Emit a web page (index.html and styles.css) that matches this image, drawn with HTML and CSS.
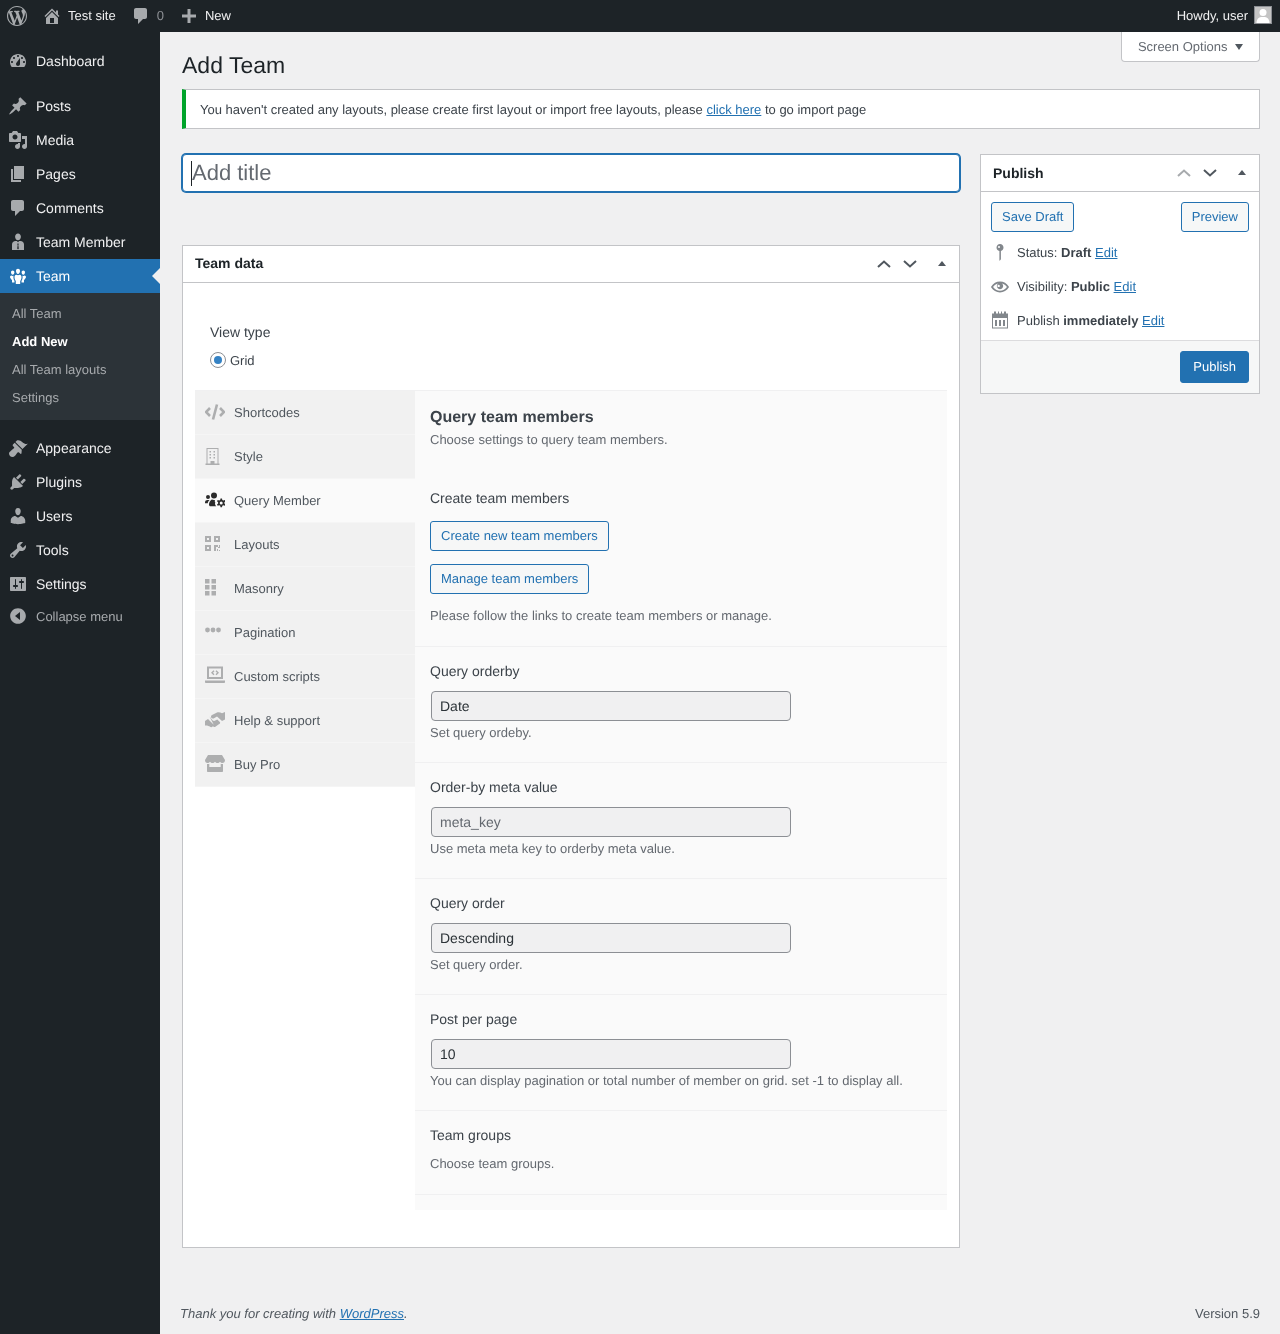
FILE: index.html
```html
<!DOCTYPE html>
<html lang="en">
<head>
  <meta charset="UTF-8">
  <meta name="viewport" content="width=device-width, initial-scale=1.0">
  <title>Add Team</title>
  <link rel="stylesheet" href="styles.css">
</head>
<body>
  <div class="adminbar">
    <div class="bar-left">
      <svg class="bar-logo" viewBox="0 0 20 20"><path fill-rule="evenodd" d="M10 0C4.480 0 0 4.490 0 10c0 5.520 4.480 10 10 10 5.510 0 10-4.480 10-10S15.510 0 10 0zM1.110 10c0-1.300.23-2.480.72-3.590L6.100 18.090C3.120 16.650 1.110 13.530 1.110 10zm9.020 1.460l2.580 6.980c-.86.29-1.760.45-2.710.45-.79 0-1.570-.11-2.290-.33zM17.840 5.750c.7 1.290 1.050 2.710 1.050 4.250 0 3.290-1.730 6.240-4.400 7.780.97-2.590 1.940-5.210 2.920-7.780.24-.64.74-1.870.43-4.250zM10 1.110c2.330 0 4.450.87 6.050 2.340-.68-.11-1.650.39-1.650 1.580 0 .74.45 1.360.9 2.100.35.61.55 1.360.55 2.460 0 1.490-1.400 5-1.400 5l-3.030-8.370c.54-.02.82-.17.82-.17.5-.05.44-1.250-.06-1.220 0 0-1.440.12-2.380.12-.87 0-2.330-.12-2.330-.12-.5-.03-.56 1.200-.06 1.220l.92.08 1.260 3.410-1.810 5.320L4.370 6.220c.55-.02 1.170-.08 1.170-.08.5-.06.44-1.130-.06-1.110 0 0-1.450.11-2.370.11-.18 0-.37 0-.58-.01C4.120 2.690 6.870 1.110 10 1.110z"/></svg>
      <span class="bar-item site-item">
        <svg class="bar-icon" viewBox="0 0 20 20"><path d="M16 8.500l1.530 1.530-1.060 1.060L10 4.620l-6.470 6.470-1.060-1.060L10 2.500l4 4v-2h2v4zm-6-2.460l6 5.990V18H4v-5.970zM12 17v-5H8v5h4z"/></svg>
        <span class="bar-text">Test site</span>
      </span>
      <span class="bar-item comment-item">
        <svg class="bar-icon" viewBox="0 0 20 20"><path d="M5 2h9c1.100 0 2 .9 2 2v7c0 1.100-.9 2-2 2h-2l-5 5v-5H5c-1.100 0-2-.9-2-2V4c0-1.100.9-2 2-2z"/></svg>
        <span class="bar-text count">0</span>
      </span>
      <span class="bar-item new-item">
        <svg class="bar-icon" viewBox="0 0 20 20"><path d="M8.500 3h3v5.500H17v3h-5.500V17h-3v-5.500H3v-3h5.500z"/></svg>
        <span class="bar-text">New</span>
      </span>
    </div>
    <div class="bar-right">
      <span class="bar-text">Howdy, user</span>
      <span class="avatar">
        <svg viewBox="0 0 16 16"><circle cx="8" cy="5.500" r="3.500"/><path d="M1.500 16c0-4 2.500-5.800 4.500-6h4c2 .2 4.500 2 4.500 6z"/></svg>
      </span>
    </div>
  </div>

  <div class="layout">
    <nav class="sidebar">
      <ul class="menu">
        <li class="menu-item">
          <svg class="menu-icon" viewBox="0 0 20 20"><path fill-rule="evenodd" d="M3.760 16h12.480c1.100-1.370 1.760-3.110 1.760-5 0-4.420-3.580-8-8-8s-8 3.580-8 8c0 1.890.66 3.630 1.760 5zM10 4c.55 0 1 .45 1 1s-.45 1-1 1-1-.45-1-1 .45-1 1-1zM6 6c.55 0 1 .45 1 1s-.45 1-1 1-1-.45-1-1 .45-1 1-1zm8 0c.55 0 1 .45 1 1s-.45 1-1 1-1-.45-1-1 .45-1 1-1zm-5.370 5.550L12 7v6c0 1.100-.9 2-2 2s-2-.9-2-2c0-.57.24-1.080.63-1.450zM4 10c.55 0 1 .45 1 1s-.45 1-1 1-1-.45-1-1 .45-1 1-1zm12 0c.55 0 1 .45 1 1s-.45 1-1 1-1-.45-1-1 .45-1 1-1z"/></svg>
          Dashboard
        </li>
        <li class="menu-sep"></li>
        <li class="menu-item">
          <svg class="menu-icon" viewBox="0 0 20 20"><path d="M10.440 3.020l1.820-1.820 6.360 6.350-1.830 1.820c-1.050-.68-2.480-.57-3.410.36l-.75.75c-.92.93-1.040 2.350-.35 3.410l-1.830 1.820-2.410-2.410-2.800 2.790c-.42.42-3.380 2.710-3.800 2.290s1.860-3.390 2.280-3.810l2.790-2.790L4.100 9.360l1.830-1.820c1.050.69 2.480.57 3.400-.36l.75-.75c.93-.92 1.050-2.350.36-3.410z"/></svg>
          Posts
        </li>
        <li class="menu-item">
          <svg class="menu-icon" viewBox="0 0 20 20"><path fill-rule="evenodd" d="M13 11V4c0-.55-.45-1-1-1h-1.670L9 1H5L3.670 3H2c-.55 0-1 .45-1 1v7c0 .55.45 1 1 1h10c.55 0 1-.45 1-1zM7 4.500c1.380 0 2.500 1.120 2.500 2.500S8.380 9.500 7 9.500 4.500 8.380 4.500 7 5.620 4.500 7 4.500zM14 6h5v10.500c0 1.380-1.120 2.500-2.500 2.500S14 17.880 14 16.500s1.120-2.500 2.500-2.500c.17 0 .34.020.5.050V9h-3V6zm-4 8.050V13h2v3.500c0 1.380-1.120 2.500-2.500 2.500S7 17.880 7 16.500 8.120 14 9.500 14c.17 0 .34.020.5.050z"/></svg>
          Media
        </li>
        <li class="menu-item">
          <svg class="menu-icon" viewBox="0 0 20 20"><path d="M6 15V2h10v13H6zm-1 1h8v2H3V5h2v11z"/></svg>
          Pages
        </li>
        <li class="menu-item">
          <svg class="menu-icon" viewBox="0 0 20 20"><path d="M5 2h9c1.100 0 2 .9 2 2v7c0 1.100-.9 2-2 2h-2l-5 5v-5H5c-1.100 0-2-.9-2-2V4c0-1.100.9-2 2-2z"/></svg>
          Comments
        </li>
        <li class="menu-item">
          <svg class="menu-icon" viewBox="0 0 20 20"><path fill-rule="evenodd" d="M10 1.500c1.700 0 2.900 1.400 2.900 3.200S11.700 8.200 10 8.200 7.100 6.500 7.100 4.700 8.300 1.500 10 1.500zM7.500 9h1.300L10 10.300 11.200 9h1.300c1.900 0 3.500 1.500 3.500 3.400V18H4v-5.600C4 10.500 5.600 9 7.500 9zm2.500 2.200L9.200 12l.5 1-.5 3.500.8 1 .8-1-.5-3.500.5-1z"/></svg>
          Team Member
        </li>
        <li class="menu-item is-current">
          <svg class="menu-icon" viewBox="0 0 20 20"><path d="M10 2.800c1.200 0 2 .9 2 2.200s-.8 2.900-2 2.900S8 6.300 8 5s.8-2.200 2-2.200zM4.700 4.500c1 0 1.700.7 1.700 1.800s-.7 2.500-1.700 2.500S3 7.400 3 6.300s.7-1.800 1.700-1.800zm10.600 0c1 0 1.700.7 1.700 1.800s-.7 2.500-1.700 2.500-1.700-1.400-1.700-2.500.7-1.800 1.700-1.800zM8.200 8.700L10 9.300l1.800-.6c1 .3 1.700 1.100 1.700 2.200 0 1.800-.6 3-1.300 4V18H7.800v-3.100c-.7-1-1.300-2.200-1.300-4 0-1.100.7-1.900 1.700-2.200zM3.300 9.600l1.400.4 1-.3c-.2.400-.3.800-.3 1.200 0 1.600.5 3 1.100 3.900v1.700H4V14c-.8-.7-2-2-2-3 0-.6.600-1.200 1.300-1.400zm13.400 0c.7.2 1.300.8 1.300 1.400 0 1-1.200 2.300-2 3v2.500h-2.500v-1.700c.6-.9 1.100-2.300 1.100-3.900 0-.4-.1-.8-.3-1.200l1 .3z"/></svg>
          Team
        </li>
        <li>
          <ul class="submenu">
            <li>All Team</li>
            <li class="is-active">Add New</li>
            <li>All Team layouts</li>
            <li>Settings</li>
          </ul>
        </li>
        <li class="menu-sep"></li>
        <li class="menu-item">
          <svg class="menu-icon" viewBox="0 0 20 20"><path d="M14.480 11.060L7.410 3.990l1.500-1.500c.5-.56 2.300-.47 3.510.32 1.210.8 1.430 1.280 2.910 2.100 1.180.64 2.450 1.260 4.450.85zm-.71.71L6.700 4.700 4.930 6.470c-.39.39-.39 1.020 0 1.410l1.060 1.060c.39.39.39 1.030 0 1.420-.6.6-1.430 1.110-2.210 1.690-.35.26-.7.53-1.010.84C1.430 13.730 1 14.620 1 15.500 1 17.430 2.570 19 4.500 19c.88 0 1.770-.43 2.570-1.230.31-.31.58-.66.84-1.010.58-.78 1.090-1.610 1.690-2.210.39-.39 1.030-.39 1.420 0l1.060 1.060c.39.39 1.020.39 1.410 0z"/></svg>
          Appearance
        </li>
        <li class="menu-item">
          <svg class="menu-icon" viewBox="0 0 20 20"><path d="M13.110 4.360L9.870 7.600 8 5.730l3.240-3.240c.35-.34 1.050-.2 1.560.32.52.51.66 1.210.31 1.550zm-8 1.770l.91-1.120 9.010 9.010-1.190.84c-.71.71-2.630 1.160-3.820 1.160H6.140L4.900 17.260c-.59.59-1.540.59-2.120 0-.59-.58-.59-1.530 0-2.120l1.240-1.240v-3.880c0-1.130.4-3.190 1.090-3.890zm7.260 3.970l3.240-3.240c.34-.35 1.040-.21 1.550.31.52.51.66 1.210.31 1.550l-3.240 3.250z"/></svg>
          Plugins
        </li>
        <li class="menu-item">
          <svg class="menu-icon" viewBox="0 0 20 20"><path d="M10 9.250c-2.270 0-2.730-3.440-2.730-3.440C7 4.020 7.820 2 9.970 2c2.160 0 2.980 2.020 2.710 3.810 0 0-.41 3.440-2.680 3.440zm0 2.570L12.720 10c2.390 0 4.520 2.330 4.520 4.530v2.490s-3.650 1.130-7.240 1.130c-3.650 0-7.240-1.130-7.240-1.130v-2.490c0-2.250 1.940-4.480 4.470-4.480z"/></svg>
          Users
        </li>
        <li class="menu-item">
          <svg class="menu-icon" viewBox="0 0 20 20"><path fill-rule="evenodd" d="M16.680 9.770c-1.340 1.340-3.300 1.670-4.950.99l-5.410 6.520c-.99.99-2.590.99-3.570 0-.99-.98-.99-2.580 0-3.570l6.520-5.420c-.68-1.650-.35-3.610.99-4.950 1.280-1.280 3.120-1.620 4.720-1.060l-2.890 2.890 2.820 2.820 2.860-2.870c.53 1.580.18 3.400-1.090 4.650zM3.810 16.210c.4.390 1.040.39 1.430 0 .4-.4.4-1.040 0-1.430-.39-.4-1.030-.4-1.430 0-.39.39-.39 1.030 0 1.430z"/></svg>
          Tools
        </li>
        <li class="menu-item">
          <svg class="menu-icon" viewBox="0 0 20 20"><path fill-rule="evenodd" d="M18 16V4c0-.55-.45-1-1-1H3c-.55 0-1 .45-1 1v12c0 .55.45 1 1 1h14c.55 0 1-.45 1-1zM8 11h1c.55 0 1 .45 1 1s-.45 1-1 1H8v1.500c0 .28-.22.5-.5.5s-.5-.22-.5-.5V13H6c-.55 0-1-.45-1-1s.45-1 1-1h1V5.500c0-.28.22-.5.5-.5s.5.22.5.5V11zm5-2h-1c-.55 0-1-.45-1-1s.45-1 1-1h1V5.500c0-.28.22-.5.5-.5s.5.22.5.5V7h1c.55 0 1 .45 1 1s-.45 1-1 1h-1v5.500c0 .28-.22.5-.5.5s-.5-.22-.5-.5V9z"/></svg>
          Settings
        </li>
        <li class="menu-collapse">
          <svg class="menu-icon" viewBox="0 0 20 20"><path fill-rule="evenodd" d="M10 2.160c4.330 0 7.840 3.510 7.840 7.840s-3.510 7.840-7.840 7.840S2.160 14.330 2.160 10 5.670 2.160 10 2.160zM12 14V6l-5 4z"/></svg>
          Collapse menu
        </li>
      </ul>
    </nav>

    <main class="content">
      <div class="wrap">
        <header class="page-head">
          <h1>Add Team</h1>
          <button class="screen-options">Screen Options <span class="caret-down"></span></button>
        </header>

        <div class="notice">You haven't created any layouts, please create first layout or import free layouts, please <a href="#">click here</a> to go import page</div>

        <div class="columns">
          <div class="col-main">
            <div class="title-wrap">
              <input class="title-input" type="text" placeholder="Add title">
              <span class="title-caret"></span>
            </div>

            <section class="postbox team-box">
              <div class="postbox-head">
                <h2>Team data</h2>
                <div class="handles">
                  <svg class="chev" viewBox="0 0 14 8"><polyline points="1,7 7,1.500 13,7"/></svg>
                  <svg class="chev" viewBox="0 0 14 8"><polyline points="1,1 7,6.500 13,1"/></svg>
                  <span class="caret-up"></span>
                </div>
              </div>
              <div class="team-body">
                <div class="view-type">
                  <div class="field-label">View type</div>
                  <label class="radio-row"><span class="radio"></span>Grid</label>
                </div>

                <div class="settings">
                  <ul class="tabs">
                    <li class="tab">
                      <svg class="tab-icon" viewBox="0 0 20 20"><path class="line" d="M5 6l-4 4 4 4M15 6l4 4-4 4M12 2.500L8 17.500"/></svg>
                      Shortcodes
                    </li>
                    <li class="tab">
                      <svg class="tab-icon" viewBox="0 0 20 20"><path fill-rule="evenodd" d="M1.500 2h12v15.500h1V19H.5v-1.500h1zM2.500 3v14.500h3V15h4v2.500h3V3zM4.500 5h1.500v1.500H4.500zm4 0H10v1.500H8.500zm-4 3h1.500v1.500H4.500zm4 0H10v1.500H8.500zm-4 3h1.500v1.500H4.500zm4 0H10v1.500H8.500z"/></svg>
                      Style
                    </li>
                    <li class="tab is-active">
                      <svg class="tab-icon" viewBox="0 0 20 20"><path fill-rule="evenodd" d="M9 2.500a3 3 0 1 1 0 6 3 3 0 0 1 0-6zM3 5a2 2 0 1 1 0 4 2 2 0 0 1 0-4zM0 12.500C0 10.800 1 10 2.500 10h1.200c.3 0 .6.100.8.300-1 .7-1.600 1.700-1.700 2.900H0zM6.800 9.500c.6.300 1.400.500 2.200.500h1c-.3.600-.3 1.400 0 2l.3.500c-.5 1-.3 2.300.5 3.200.1.200.3.400.5.500H5.500c-.8 0-1.500-.7-1.500-1.500 0-2.200 1-4.200 2.800-5.200zM15.500 8.500h1.500l.3 1.500 1 .5 1.500-.5.700 1.300-1.100 1v1.200l1.100 1-.7 1.300-1.500-.5-1 .5-.3 1.500h-1.500l-.3-1.500-1-.5-1.500.5-.7-1.300 1.100-1v-1.200l-1.100-1 .7-1.300 1.500.5 1-.5zM16.200 11.500a1.500 1.500 0 1 0 0 3 1.500 1.500 0 0 0 0-3z"/></svg>
                      Query Member
                    </li>
                    <li class="tab">
                      <svg class="tab-icon" viewBox="0 0 20 20"><path fill-rule="evenodd" d="M0 2h6v6H0zm2 2v2h2V4zM9 2h6v6H9zm2 2v2h2V4zM0 11h6v6H0zm2 2v2h2v-2zM9 11h4v2h-2v4H9zM14 11h1v3h-2v-1h1zM12 15h1v2h-1zM14 16h1v1h-1z"/></svg>
                      Layouts
                    </li>
                    <li class="tab">
                      <svg class="tab-icon" viewBox="0 0 20 20"><path d="M0 1h4.500v4.500H0zM6.500 1H11v4.500H6.500zM0 7h4.500v4.500H0zM6.500 7H11v4.500H6.500zM0 13h4.500v4.500H0zM6.500 13H11v4.500H6.500z"/></svg>
                      Masonry
                    </li>
                    <li class="tab">
                      <svg class="tab-icon" viewBox="0 0 20 20"><circle cx="2.500" cy="8" r="2.400"/><circle cx="8" cy="8" r="2.400"/><circle cx="13.500" cy="8" r="2.400"/></svg>
                      Pagination
                    </li>
                    <li class="tab">
                      <svg class="tab-icon" viewBox="0 0 20 20"><path fill-rule="evenodd" d="M2 .5h16V13H2zm2 2V11h12V2.500zM0 14.500h20V16c0 .6-.5 1-1 1H1c-.5 0-1-.4-1-1zM8.500 4.300l1 1L8 6.800l1.500 1.500-1 1L6 6.800zM11.500 4.300L14 6.800l-2.500 2.500-1-1L12 6.800l-1.500-1.500z"/></svg>
                      Custom scripts
                    </li>
                    <li class="tab">
                      <svg class="tab-icon" viewBox="0 0 20 20"><path d="M0 11l3-2 5 5c.8.900.3 2-.6 2.800-.9.600-1.900.4-2.600-.3L2 15.500H0zM20 2l-3 1.200c-1.500-.9-3.200-1.200-5-.8L7 5c-1 .6-1.300 1.800-.7 2.800.5.800 1.500 1 2.300.6l3.400-1.800 5 4.500 3-1.600zM4.500 6.500l2 2.500 1.200 1.500c.8.500 1.800.5 2.600.1l2-1.100 2.500 2.500c.7.700.2 1.700-.6 2L10 17c-.7.300-1.300 0-1.800-.5l.2-2.500z"/></svg>
                      Help &amp; support
                    </li>
                    <li class="tab">
                      <svg class="tab-icon" viewBox="0 0 20 20"><path fill-rule="evenodd" d="M3 1h14l3 5c0 1.700-1 3-2.500 3-1 0-1.900-.5-2.500-1.300C14.400 8.500 13.500 9 12.500 9s-1.900-.5-2.500-1.300C9.400 8.500 8.500 9 7.500 9S5.600 8.500 5 7.700C4.400 8.500 3.500 9 2.500 9 1 9 0 7.700 0 6zM2 10c.8.200 1.600.1 2.300-.2v3.200h11.400V9.800c.7.300 1.500.4 2.300.2v7c0 .6-.4 1-1 1H3c-.6 0-1-.4-1-1z"/></svg>
                      Buy Pro
                    </li>
                  </ul>

                  <div class="panel">
                    <div class="panel-section first-section">
                      <h3>Query team members</h3>
                      <p class="panel-desc">Choose settings to query team members.</p>
                      <div class="field-label create-label">Create team members</div>
                      <div class="create-btns">
                        <button class="btn-outline">Create new team members</button>
                        <button class="btn-outline">Manage team members</button>
                      </div>
                      <p class="hint follow-hint">Please follow the links to create team members or manage.</p>
                    </div>

                    <div class="panel-section">
                      <div class="field-label">Query orderby</div>
                      <input class="field-input" type="text" value="Date">
                      <p class="hint">Set query ordeby.</p>
                    </div>

                    <div class="panel-section">
                      <div class="field-label">Order-by meta value</div>
                      <input class="field-input" type="text" placeholder="meta_key">
                      <p class="hint">Use meta meta key to orderby meta value.</p>
                    </div>

                    <div class="panel-section">
                      <div class="field-label">Query order</div>
                      <input class="field-input" type="text" value="Descending">
                      <p class="hint">Set query order.</p>
                    </div>

                    <div class="panel-section">
                      <div class="field-label">Post per page</div>
                      <input class="field-input" type="text" value="10">
                      <p class="hint">You can display pagination or total number of member on grid. set -1 to display all.</p>
                    </div>

                    <div class="panel-section groups-section">
                      <div class="field-label">Team groups</div>
                      <p class="hint">Choose team groups.</p>
                    </div>
                  </div>
                </div>
              </div>
            </section>
          </div>

          <aside class="col-side">
            <section class="postbox">
              <div class="postbox-head">
                <h2>Publish</h2>
                <div class="handles">
                  <svg class="chev is-off" viewBox="0 0 14 8"><polyline points="1,7 7,1.500 13,7"/></svg>
                  <svg class="chev" viewBox="0 0 14 8"><polyline points="1,1 7,6.500 13,1"/></svg>
                  <span class="caret-up"></span>
                </div>
              </div>
              <div class="publish-actions">
                <button class="btn-outline">Save Draft</button>
                <button class="btn-outline">Preview</button>
              </div>
              <div class="pub-row">
                <svg class="pub-icon" viewBox="1 1 18 18"><path fill-rule="evenodd" d="M13.500 5.500c0 1.700-1.100 3-2.600 3.400V17c0 .6-.9 1.500-1.500 1.700V8.900C7.600 8.500 6.500 7.200 6.500 5.500 6.500 3.600 8 2 10 2s3.500 1.600 3.500 3.500zM9 4a1 1 0 1 0 0 2 1 1 0 0 0 0-2z"/></svg>
                <span>Status: <b>Draft</b> <a href="#">Edit</a></span>
              </div>
              <div class="pub-row">
                <svg class="pub-icon eye-icon" viewBox="0 0 20 20"><path fill-rule="evenodd" d="M19.700 9.400C17.700 6 14 3.900 10 3.900S2.300 6 .3 9.400L0 10l.3.6c2 3.400 5.700 5.500 9.700 5.500s7.700-2.100 9.700-5.500l.3-.6zM10 14.100c-3.100 0-6-1.600-7.700-4.100C3.600 8 5.700 6.600 8 6.100c-.9.600-1.500 1.700-1.500 2.900 0 1.900 1.600 3.500 3.500 3.500s3.500-1.600 3.500-3.500c0-1.200-.6-2.300-1.500-2.900 2.300.5 4.400 1.900 5.700 3.900-1.700 2.500-4.600 4.100-7.700 4.100zM8.500 7.500a1.300 1.300 0 1 0 0 2.600 1.300 1.300 0 0 0 0-2.600z"/></svg>
                <span>Visibility: <b>Public</b> <a href="#">Edit</a></span>
              </div>
              <div class="pub-row">
                <svg class="pub-icon" viewBox="1 1 18 18"><path fill-rule="evenodd" d="M4 1.500h2v2h2v-2h1v2h2v-2h1v2h2v-2h2v2h2V18.500H2V3.500h2zM3 8v9.500h14V8zM5 10h2v6H5zm4 0h2v6H9zm4 0h2v6h-2z"/></svg>
                <span>Publish <b>immediately</b> <a href="#">Edit</a></span>
              </div>
              <div class="publish-foot">
                <button class="btn-primary">Publish</button>
              </div>
            </section>
          </aside>
        </div>
      </div>

      <footer class="page-foot">
        <em>Thank you for creating with <a href="#">WordPress</a>.</em>
        <span>Version 5.9</span>
      </footer>
    </main>
  </div>
</body>
</html>
```

FILE: styles.css
```css
* {
  box-sizing: border-box;
}
body {
  margin: 0;
  font-family: "Liberation Sans", Arial, sans-serif;
  font-size: 13px;
  color: #3c434a;
  background-color: #f0f0f1;
  text-rendering: geometricPrecision;
}
a {
  color: #2271b1;
}
ul {
  list-style: none;
  margin: 0;
  padding: 0;
}
svg {
  display: block;
  flex: none;
  fill: currentColor;
}
input,
button {
  text-rendering: geometricPrecision;
}

/* top bar */
.adminbar {
  display: flex;
  justify-content: space-between;
  align-items: center;
  height: 32px;
  background-color: #1d2327;
  color: #f0f0f1;
  will-change: transform;
}
.bar-left {
  display: flex;
  align-items: center;
}
.bar-logo {
  width: 20px;
  height: 20px;
  margin-left: 7px;
  color: #a7aaad;
}
.bar-item {
  display: flex;
  align-items: center;
}
.bar-icon {
  width: 20px;
  height: 20px;
  color: #a7aaad;
}
.bar-text {
  margin-top: -2px;
}
.site-item {
  margin-left: 15px;
  gap: 6px;
}
.comment-item {
  margin-left: 15px;
  gap: 6px;
}
.count {
  color: #8c8f94;
}
.new-item {
  margin-left: 15px;
  gap: 6px;
}
.bar-right {
  display: flex;
  align-items: center;
  gap: 6px;
  padding-right: 8px;
}
.avatar {
  width: 18px;
  height: 18px;
  margin-top: -2px;
  border: 1px solid #8c8f94;
  background-color: #c4c4c4;
  color: #fff;
  overflow: hidden;
}

/* left menu */
.layout {
  display: flex;
  will-change: transform;
}
.sidebar {
  width: 160px;
  flex: none;
  background-color: #1d2327;
  color: #f0f0f1;
  font-size: 14px;
}
.menu {
  padding-top: 12px;
}
.menu-item {
  position: relative;
  display: flex;
  align-items: center;
  gap: 8px;
  height: 34px;
  padding-left: 8px;
}
.menu-icon {
  width: 20px;
  height: 20px;
  color: #a7aaad;
}
.menu-sep {
  height: 11px;
}
.is-current {
  background-color: #2271b1;
  color: #fff;
}
.is-current .menu-icon {
  color: #fff;
}
.is-current::after {
  content: "";
  position: absolute;
  right: 0;
  top: 9px;
  border: 8px solid transparent;
  border-right-color: #f0f0f1;
  border-left-width: 0;
}
.submenu {
  padding: 7px 0 8px;
  background-color: #2c3338;
  font-size: 13px;
  color: #a7aaad;
}
.submenu li {
  height: 28px;
  line-height: 28px;
  padding-left: 12px;
}
.submenu .is-active {
  font-weight: bold;
  color: #fff;
}
.menu-collapse {
  display: flex;
  align-items: center;
  gap: 8px;
  height: 30px;
  padding-left: 8px;
  font-size: 13px;
  color: #a7aaad;
}

/* main column */
.content {
  flex: 1;
  min-width: 0;
  padding: 0 20px;
}
.wrap {
  margin-left: 2px;
}
.page-head {
  display: flex;
  justify-content: space-between;
  align-items: flex-start;
  height: 57px;
}
h1 {
  margin: 18px 0 0;
  font-size: 23px;
  font-weight: 400;
  line-height: 30px;
  color: #1d2327;
}
.screen-options {
  width: 139px;
  height: 30px;
  padding: 0;
  border: 1px solid #c3c4c7;
  border-top: 0;
  border-radius: 0 0 4px 4px;
  background-color: #fff;
  font: inherit;
  color: #646970;
}
.caret-down {
  display: inline-block;
  margin-left: 4px;
  vertical-align: 1px;
  border: 4px solid transparent;
  border-top: 6px solid #50575e;
  border-bottom: 0;
}
.notice {
  height: 40px;
  padding-left: 14px;
  border: 1px solid #c3c4c7;
  border-left: 4px solid #00a32a;
  background-color: #fff;
  line-height: 39px;
}
.columns {
  display: flex;
  gap: 20px;
  margin-top: 25px;
}
.col-main {
  width: 778px;
}
.col-side {
  width: 280px;
}
.title-wrap {
  position: relative;
}
.title-input {
  display: block;
  width: 100%;
  height: 38px;
  padding: 0 9px;
  border: 1px solid #2271b1;
  border-radius: 4px;
  box-shadow: 0 0 0 1px #2271b1;
  background-color: #fff;
  outline: 0;
  font: 22px "Liberation Sans", Arial, sans-serif;
}
.title-input::placeholder {
  color: #646970;
  opacity: 1;
}
.title-caret {
  position: absolute;
  left: 9px;
  top: 7px;
  width: 1px;
  height: 25px;
  background-color: #1d2327;
}

/* boxes */
.postbox {
  border: 1px solid #c3c4c7;
  background-color: #fff;
}
.team-box {
  margin-top: 53px;
  height: 1003px;
}
.postbox-head {
  display: flex;
  justify-content: space-between;
  align-items: center;
  height: 37px;
  padding-left: 12px;
  border-bottom: 1px solid #c3c4c7;
}
.postbox-head h2 {
  margin: 0;
  font-size: 14px;
  line-height: 18px;
  color: #1d2327;
}
.team-box .postbox-head h2 {
  margin-top: -2px;
}
.handles {
  display: flex;
  align-items: center;
  padding-right: 13px;
}
.chev {
  width: 14px;
  height: 8px;
  margin-right: 12px;
  color: #50575e;
  fill: none;
}
.chev polyline {
  stroke: currentColor;
  stroke-width: 2;
  fill: none;
}
.chev.is-off {
  color: #a7aaad;
}
.caret-up {
  margin: -2px 0 0 9px;
  border: 4px solid transparent;
  border-bottom: 5px solid #50575e;
  border-top: 0;
}
.team-body {
  padding: 40px 12px 0;
}
.view-type {
  padding: 0 0 21px 15px;
}
.field-label {
  font-size: 14px;
  line-height: 18px;
}
.radio-row {
  display: flex;
  align-items: center;
  gap: 4px;
  height: 18px;
  margin-top: 10px;
}
.radio {
  display: flex;
  align-items: center;
  justify-content: center;
  width: 16px;
  height: 16px;
  border: 1px solid #8c8f94;
  border-radius: 50%;
  background-color: #fff;
}
.radio::before {
  content: "";
  width: 8px;
  height: 8px;
  border-radius: 50%;
  background-color: #3582c4;
}

/* tabs with settings */
.settings {
  display: flex;
  align-items: flex-start;
  border-top: 1px solid #f0f0f1;
}
.tabs {
  width: 220px;
  flex: none;
  background-color: #f1f1f1;
}
.tab {
  display: flex;
  align-items: center;
  gap: 9px;
  height: 44px;
  padding-left: 10px;
  border-bottom: 1px solid #f5f5f5;
  color: #50575e;
}
.tab-icon {
  width: 20px;
  height: 20px;
  margin-top: -2px;
  color: #adaeaf;
}
.line {
  fill: none;
  stroke: currentColor;
  stroke-width: 2.600;
}
.tab.is-active {
  background-color: #fafafa;
}
.tab.is-active .tab-icon {
  color: #2b2b2b;
}
.panel {
  flex: 1;
  padding-bottom: 15px;
  background-color: #fafafa;
}
.panel-section {
  height: 116px;
  padding: 15px 15px 0;
  border-bottom: 1px solid #f0f0f1;
}
.panel-section p {
  margin: 0;
}
.first-section {
  height: 256px;
  padding-top: 17px;
}
h3 {
  margin: 0;
  font-size: 16px;
  line-height: 20px;
  color: #3c434a;
}
.panel-section .panel-desc {
  margin-top: 2px;
  line-height: 20px;
  color: #646970;
}
.create-label {
  margin-top: 39px;
}
.create-btns {
  display: flex;
  flex-direction: column;
  align-items: flex-start;
  gap: 13px;
  margin-top: 14px;
}
.field-input {
  display: block;
  width: 360px;
  height: 30px;
  margin: 11px 0 0 1px;
  padding: 0 8px;
  border: 1px solid #8c8f94;
  border-radius: 4px;
  background-color: #f0f0f1;
  font: 14px "Liberation Sans", Arial, sans-serif;
  color: #2c3338;
}
.field-input::placeholder {
  color: #646970;
  opacity: 1;
}
.panel-section .hint {
  margin-top: 3px;
  line-height: 18px;
  color: #646970;
}
.panel-section .follow-hint {
  margin-top: 13px;
}
.groups-section {
  height: 84px;
}
.panel-section.groups-section .hint {
  margin-top: 11px;
}

/* buttons */
.btn-outline {
  height: 30px;
  padding: 0 10px 2px;
  border: 1px solid #2271b1;
  border-radius: 3px;
  background-color: #f6f7f7;
  font: inherit;
  color: #2271b1;
}
.btn-primary {
  height: 32px;
  padding: 0 12px 2px;
  border: 1px solid #2271b1;
  border-radius: 3px;
  background-color: #2271b1;
  font: inherit;
  color: #fff;
}

/* publish box */
.publish-actions {
  display: flex;
  justify-content: space-between;
  padding: 10px 10px 3px;
}
.pub-row {
  display: flex;
  align-items: center;
  gap: 8px;
  height: 34px;
  padding-left: 10px;
}
.pub-icon {
  width: 18px;
  height: 18px;
  color: #82878c;
}
.eye-icon {
  margin-top: 2px;
}
.pub-row a {
  text-decoration: underline;
}
.publish-foot {
  display: flex;
  justify-content: flex-end;
  margin-top: 3px;
  padding: 10px;
  border-top: 1px solid #dcdcde;
  background-color: #f6f7f7;
}

/* footer */
.page-foot {
  display: flex;
  justify-content: space-between;
  margin-top: 56px;
  padding-bottom: 10px;
  line-height: 20px;
  color: #50575e;
}
```
